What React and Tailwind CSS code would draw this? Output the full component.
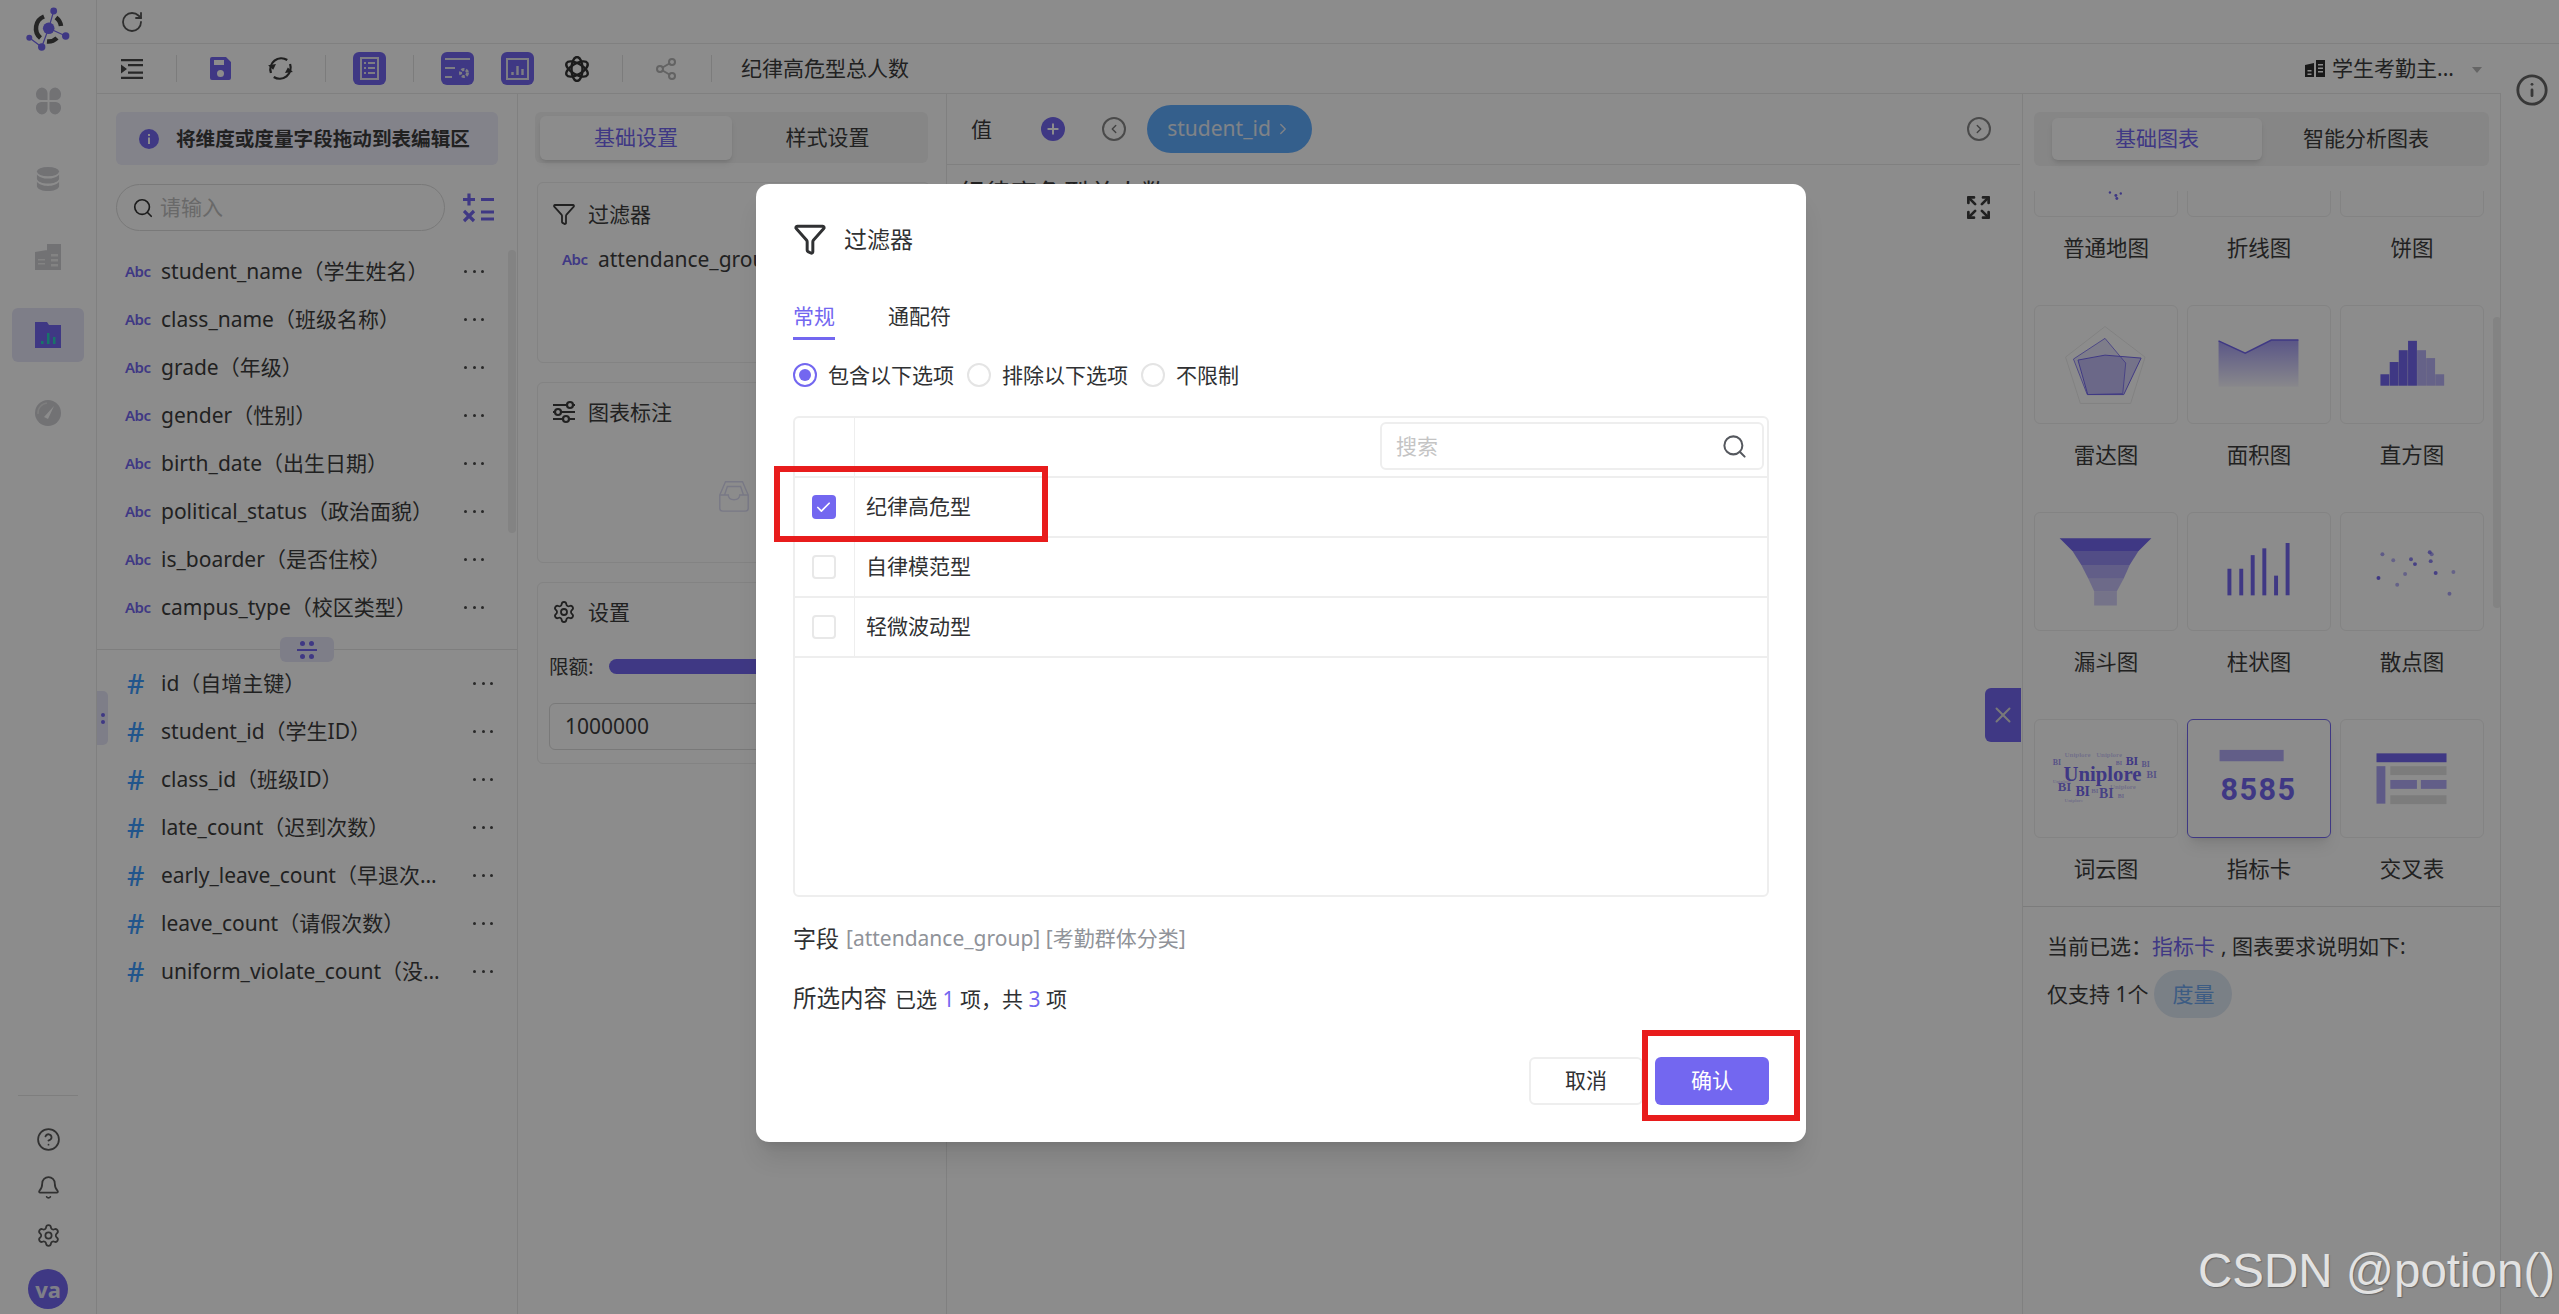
import {
    Bell,
    Check,
    ChevronLeft,
    ChevronRight,
    CircleHelp,
    Expand,
    Funnel,
    Info,
    Plus,
    RotateCw,
    Search,
    Settings,
    Share2,
    X,
} from "lucide-react";

const PRIMARY = "#7367f0";

const dimensions = [
    "student_name（学生姓名）",
    "class_name（班级名称）",
    "grade（年级）",
    "gender（性别）",
    "birth_date（出生日期）",
    "political_status（政治面貌）",
    "is_boarder（是否住校）",
    "campus_type（校区类型）",
];

const measures = [
    "id（自增主键）",
    "student_id（学生ID）",
    "class_id（班级ID）",
    "late_count（迟到次数）",
    "early_leave_count（早退次数）",
    "leave_count（请假次数）",
    "uniform_violate_count（没穿校服次数）",
];

function Dots() {
    return (
        <div className="flex w-[20px] shrink-0 justify-between">
            <span className="size-[3px] rounded-full bg-[#4a4a4a]"></span>
            <span className="size-[3px] rounded-full bg-[#4a4a4a]"></span>
            <span className="size-[3px] rounded-full bg-[#4a4a4a]"></span>
        </div>
    );
}

function Logo() {
    return (
        <svg width="48" height="48" viewBox="0 0 48 48" fill="none">
            <g stroke={PRIMARY} strokeWidth="1.2">
                <path d="M24.7 24.3 29.7 7M24.7 24.3 41.7 32M24.7 24.3 17.7 43M17.7 43 5.3 33.7" />
            </g>
            <g stroke="#444" strokeWidth="4.5" strokeLinecap="butt">
                <path d="M20 12.5A12.7 12.7 0 0 0 16.5 34" />
                <path d="M32 13.5A12.7 12.7 0 0 1 37 22" />
                <path d="M23 37.5A12.7 12.7 0 0 0 33 34" />
            </g>
            <circle cx="24.7" cy="24.3" r="5.8" fill={PRIMARY} />
            <circle cx="29.7" cy="7" r="3.4" fill={PRIMARY} />
            <circle cx="41.7" cy="32" r="3.7" fill={PRIMARY} />
            <circle cx="17.7" cy="43" r="3.7" fill={PRIMARY} />
            <circle cx="5.3" cy="33.7" r="3" fill={PRIMARY} />
        </svg>
    );
}

function NavItem({ active, children }) {
    return (
        <div
            className={`flex h-[54px] w-[72px] items-center justify-center rounded-[6px] ${
                active ? "bg-[#e6e6f8]" : ""
            }`}
        >
            {children}
        </div>
    );
}

function Sidebar() {
    return (
        <div className="flex h-full w-[97px] shrink-0 flex-col items-center border-r border-[#eaeaea] pt-[4px] pb-[5px]">
            <Logo />
            <div className="mt-[22px] flex flex-col gap-[24px]">
                <NavItem>
                    <svg width="25" height="28" viewBox="0 0 26 28" fill="#cfcfd4">
                        <path d="M12 13H5.5A5.5 5.5 0 0 1 0 7.5 7 7 0 0 1 6 0a6 6 0 0 1 6 6zM14 13h6.5A5.5 5.5 0 0 0 26 7.5 7 7 0 0 0 20 0a6 6 0 0 0-6 6zM12 15H5.5A5.5 5.5 0 0 0 0 20.5 7 7 0 0 0 6 28a6 6 0 0 0 6-6zM14 15h6.5A5.5 5.5 0 0 1 26 20.5 7 7 0 0 1 20 28a6 6 0 0 1-6-6z" />
                    </svg>
                </NavItem>
                <NavItem>
                    <svg width="24" height="24" viewBox="0 0 24 26" fill="#cfcfd4">
                        <ellipse cx="12" cy="5" rx="12" ry="5" />
                        <path d="M0 8c2 3 7 4.5 12 4.5S22 11 24 8v5c-1 3-6 5-12 5S1 16 0 13zM0 16c2 3 7 4.5 12 4.5S22 19 24 16v5c-1 3-6 5-12 5S1 24 0 21z" />
                    </svg>
                </NavItem>
                <NavItem>
                    <svg width="26" height="26" viewBox="0 0 26 26">
                        <path d="M0 8l12-2v20H0zM12 0h14v26H12z" fill="#cfcfd4" />
                        <path d="M16 10h7v2.5h-7zM16 15h7v2.5h-7zM16 20h7v2.5h-7zM3 15h7v1.5H3zM3 19h7v1.5H3z" fill="#eeeeee" />
                    </svg>
                </NavItem>
                <NavItem active>
                    <svg width="26" height="26" viewBox="0 0 26 26">
                        <path d="M0 0h12l2 3h12v23H0z" fill={PRIMARY} />
                        <path d="M6 19h2.5v3H6z" fill="#2dd4bf" />
                        <path d="M12 11h2.5v11H12z" fill="#2dd4bf" />
                        <path d="M18 15h2.5v7H18z" fill="#2dd4bf" />
                    </svg>
                </NavItem>
                <NavItem>
                    <svg width="26" height="28" viewBox="0 0 26 28">
                        <circle cx="13" cy="14" r="13" fill="#cfcfd4" />
                        <path d="M9 18 19 7l-6 13z" fill="#ffffff" />
                        <path d="M3 15a10 10 0 0 1 9-11" stroke="#e6e6e6" strokeWidth="1.5" fill="none" />
                    </svg>
                </NavItem>
            </div>
            <div className="mt-auto mb-[19px] h-px w-[60px] bg-[#e6e6e6]"></div>
            <div className="flex h-[48px] items-center justify-center text-[#5a5a5a]">
                <CircleHelp size={25} strokeWidth={1.7} />
            </div>
            <div className="flex h-[48px] items-center justify-center text-[#5a5a5a]">
                <Bell size={25} strokeWidth={1.7} />
            </div>
            <div className="flex h-[48px] items-center justify-center text-[#5a5a5a]">
                <Settings size={25} strokeWidth={1.7} />
            </div>
            <div className="mt-[10px] flex size-[40px] items-center justify-center rounded-full bg-[#7367f0] text-[22px] font-bold text-[#e8e8f8]">
                va
            </div>
        </div>
    );
}

function Tile({ children }) {
    return (
        <div className="flex size-[33px] items-center justify-center rounded-[6px] bg-[#7367f0]">
            <svg width="33" height="33" viewBox="0 0 33 33" fill="none" stroke="#e4e4ee" strokeWidth="2">
                {children}
            </svg>
        </div>
    );
}

function Slot({ className, children }) {
    return (
        <div className={`flex w-[44px] shrink-0 items-center justify-center ${className}`}>
            {children}
        </div>
    );
}

function Divider({ className }) {
    return <div className={`h-[27px] w-px shrink-0 bg-[#e2e2e2] ${className}`}></div>;
}

function Toolbar() {
    return (
        <div className="flex h-[50px] shrink-0 items-center border-b border-[#eaeaea] pl-[13px] pr-[19px]">
            <Slot>
                <svg width="22" height="20" viewBox="0 0 22 20" fill="#4a4a4a">
                    <path d="M0 0h22v2.2H0zM7 5h15v2.2H7zM7 12.5h15v2.2H7zM0 17.8h22V20H0zM0 5.5 6 10 0 14.5z" />
                </svg>
            </Slot>
            <Divider className="ml-[22px]" />
            <Slot className="ml-[21px]">
                <svg width="21" height="23" viewBox="0 0 21 23" fill={PRIMARY}>
                    <path fillRule="evenodd" d="M2 0h14l5 5v16a2 2 0 0 1-2 2H2a2 2 0 0 1-2-2V2a2 2 0 0 1 2-2zm2 3v5h10V3zm6.5 10a3.5 3.5 0 1 0 0 7 3.5 3.5 0 0 0 0-7z" />
                </svg>
            </Slot>
            <Slot className="ml-[16px]">
                <svg width="27" height="27" viewBox="0 0 24 24" fill="none" stroke="#3a3a3a" strokeWidth="2">
                    <path d="M3.5 16A9.8 9.8 0 0 1 18 4.5" />
                    <path d="M20.5 8A9.8 9.8 0 0 1 6 19.5" />
                    <path d="M1 9l4.5 4L8 8z" fill="#3a3a3a" stroke="none" />
                    <path d="M23 15l-4.5-4L16 16z" fill="#3a3a3a" stroke="none" />
                </svg>
            </Slot>
            <Divider className="ml-[23px]" />
            <Slot className="ml-[21px]">
                <Tile>
                    <rect x="8" y="6" width="17" height="21" />
                    <path d="M11 11h2M15 11h7M11 16h2M15 16h7M11 21h2M15 21h7" />
                </Tile>
            </Slot>
            <Divider className="ml-[22px]" />
            <Slot className="ml-[21px]">
                <Tile>
                    <path d="M4 7h25M4 16h10M4 25h7" />
                    <circle cx="23" cy="21" r="3.5" strokeWidth="3" strokeDasharray="3 1.5" />
                </Tile>
            </Slot>
            <Slot className="ml-[16px]">
                <Tile>
                    <rect x="6" y="7" width="21" height="20" />
                    <path d="M11.5 23v-3M16.5 23v-9M21.5 23v-6" strokeWidth="2.4" />
                </Tile>
            </Slot>
            <Slot className="ml-[16px]">
                <svg width="26" height="26" viewBox="0 0 26 26" fill="none" stroke="#333333" strokeWidth="2.4">
                    <ellipse cx="13" cy="13" rx="5.5" ry="12" />
                    <ellipse cx="13" cy="13" rx="5.5" ry="12" transform="rotate(60 13 13)" />
                    <ellipse cx="13" cy="13" rx="5.5" ry="12" transform="rotate(120 13 13)" />
                </svg>
            </Slot>
            <Divider className="ml-[23px]" />
            <Slot className="ml-[21px] text-[#b4b4b4]">
                <Share2 size={24} strokeWidth={2} />
            </Slot>
            <Divider className="ml-[23px]" />
            <div className="ml-[29px] text-[21px] leading-none text-[#3d3d3d]">纪律高危型总人数</div>
            <div className="ml-auto flex items-center">
                <svg width="20" height="17" viewBox="0 0 20 17" fill="#2e2e2e">
                    <path fillRule="evenodd" d="M0 5l9-2v14H0zm2.5 5v1.5h4V10zm0 3.5V15h4v-1.5zM11 0h9v17h-9zm2 4v1.5h5V4zm0 3.5V9h5V7.5zm0 3.5v1.5h5V11z" />
                </svg>
                <div className="ml-[7px] text-[21px] leading-none text-[#3d3d3d]">学生考勤主...</div>
                <div className="ml-[18px] mt-[2px] h-0 w-0 border-x-[5.5px] border-t-[6px] border-x-transparent border-t-[#b8b8b8]"></div>
            </div>
        </div>
    );
}

function FieldRow({ text }) {
    return (
        <div className="flex h-[48px] items-center pl-[28px] pr-[33px]">
            <span className="w-[36px] shrink-0 text-[15px] font-semibold tracking-[-0.5px] text-[#7367f0]">Abc</span>
            <span className="truncate text-[21px] leading-[32px] text-[#3d3d3d]">{text}</span>
            <div className="ml-auto">
                <Dots />
            </div>
        </div>
    );
}

function MeasureRow({ text }) {
    return (
        <div className="flex h-[48px] items-center pl-[28px] pr-[24px]">
            <span className="w-[36px] shrink-0 pl-[2px] text-[27px] leading-none font-medium text-[#3d9cff]">#</span>
            <span className="w-[283px] truncate text-[21px] leading-[32px] text-[#3d3d3d]">{text}</span>
            <div className="ml-auto">
                <Dots />
            </div>
        </div>
    );
}

function FieldPanel() {
    return (
        <div className="relative h-full w-[421px] shrink-0 border-r border-[#eaeaea]">
            <div className="mx-[19px] mt-[18px] flex h-[53px] items-center rounded-[6px] bg-[#eeeefc] pl-[23px]">
                <svg width="20" height="20" viewBox="0 0 20 20">
                    <circle cx="10" cy="10" r="10" fill={PRIMARY} />
                    <path d="M9 8.5h2V15H9zM9 5h2v2H9z" fill="#ffffff" />
                </svg>
                <span className="ml-[17px] text-[19.6px] leading-none font-bold text-[#3d3d3d]">
                    将维度或度量字段拖动到表编辑区
                </span>
            </div>
            <div className="ml-[19px] mt-[19px] flex items-center">
                <div className="flex h-[47px] w-[329px] items-center rounded-full border border-[#dcdcdc] pl-[15px]">
                    <Search size={22} strokeWidth={1.8} className="text-[#333333]" />
                    <span className="ml-[6px] text-[21px] leading-none text-[#c0c0c0]">请输入</span>
                </div>
                <svg className="ml-[18px]" width="31" height="30" viewBox="0 0 31 30" stroke={PRIMARY} strokeWidth="3.2" fill="none">
                    <path d="M0 6.5h12M6 .5v12M18 6.5h13M1 18l10 10M11 18 1 28M18 19h13M18 26h13" />
                </svg>
            </div>
            <div className="mt-[16px]">
                {dimensions.map((text) => (
                    <FieldRow key={text} text={text} />
                ))}
            </div>
            <div className="relative h-[28px]">
                <div className="absolute left-0 right-0 top-[18px] h-px bg-[#e6e6e6]"></div>
                <div className="absolute left-[183px] top-[6px] flex h-[25px] w-[54px] flex-col items-center justify-center gap-[3px] rounded-[6px] bg-[#e6e6f8]">
                    <div className="flex gap-[4px]">
                        <span className="size-[5px] rounded-full bg-[#7367f0]"></span>
                        <span className="size-[5px] rounded-full bg-[#7367f0]"></span>
                    </div>
                    <div className="h-[2px] w-[20px] bg-[#7367f0]"></div>
                    <div className="flex gap-[4px]">
                        <span className="size-[5px] rounded-full bg-[#7367f0]"></span>
                        <span className="size-[5px] rounded-full bg-[#7367f0]"></span>
                    </div>
                </div>
            </div>
            {measures.map((text) => (
                <MeasureRow key={text} text={text} />
            ))}
            <div className="absolute left-[411px] top-[156px] h-[283px] w-[8px] rounded-full bg-[#eeeeee]"></div>
            <div className="absolute left-0 top-[597px] flex h-[54px] w-[11px] flex-col items-center justify-center gap-[3px] rounded-r-[5px] bg-[#e6e6f8]">
                <span className="size-[4px] rounded-full bg-[#7367f0]"></span>
                <span className="size-[4px] rounded-full bg-[#7367f0]"></span>
            </div>
        </div>
    );
}

function SettingsPanel() {
    return (
        <div className="h-full w-[429px] shrink-0 border-r border-[#eaeaea] pl-[17px] pt-[18px]">
            <div className="flex h-[51px] w-[393px] items-center rounded-[6px] bg-[#f4f4f4] px-[5px]">
                <div className="flex h-[44px] w-[192px] items-center justify-center rounded-[6px] bg-white text-[21px] text-[#7367f0] shadow-md">
                    基础设置
                </div>
                <div className="flex-1 text-center text-[21px] text-[#3d3d3d]">样式设置</div>
            </div>
            <div className="ml-[2px] mt-[19px] h-[181px] w-[393px] rounded-[6px] border border-[#eeeeee] pl-[14px] pt-[19px]">
                <div className="flex items-center">
                    <Funnel size={24} strokeWidth={1.8} className="text-[#3d3d3d]" />
                    <span className="ml-[12px] text-[21px] leading-none text-[#3d3d3d]">过滤器</span>
                </div>
                <div className="ml-[10px] mt-[22px] flex items-center">
                    <span className="w-[36px] text-[15px] font-semibold tracking-[-0.5px] text-[#7367f0]">Abc</span>
                    <span className="text-[21px] leading-none text-[#3d3d3d]">attendance_group</span>
                </div>
            </div>
            <div className="ml-[2px] mt-[19px] h-[181px] w-[393px] rounded-[6px] border border-[#eeeeee] pl-[14px] pt-[17px]">
                <div className="flex items-center">
                    <svg width="24" height="24" viewBox="0 0 24 24" fill="none" stroke="#3d3d3d" strokeWidth="2.2">
                        <path d="M1 5h14M21 5h2M1 12h2M9 12h14M1 19h10M17 19h6" />
                        <circle cx="18" cy="5" r="3" />
                        <circle cx="6" cy="12" r="3" />
                        <circle cx="14" cy="19" r="3" />
                    </svg>
                    <span className="ml-[12px] text-[21px] leading-none text-[#3d3d3d]">图表标注</span>
                </div>
                <div className="mt-[54px] flex justify-center pr-[14px]">
                    <svg width="36" height="36" viewBox="0 0 38 38" fill="none" stroke="#dcdcf4" strokeWidth="1.5">
                        <path d="M4 18 10 4h18l6 14v14a3 3 0 0 1-3 3H7a3 3 0 0 1-3-3z" />
                        <path d="M4 18h9c0 3 2 5 6 5s6-2 6-5h9" />
                        <path d="M9 18l3-9h14l3 9" />
                    </svg>
                </div>
            </div>
            <div className="ml-[2px] mt-[19px] h-[182px] w-[393px] rounded-[6px] border border-[#eeeeee] pl-[11px] pt-[17px]">
                <div className="ml-[3px] flex items-center">
                    <Settings size={24} strokeWidth={1.8} className="text-[#3d3d3d]" />
                    <span className="ml-[12px] text-[21px] leading-none text-[#3d3d3d]">设置</span>
                </div>
                <div className="mt-[33px] flex items-center">
                    <span className="text-[19.6px] leading-none text-[#3d3d3d]">限额:</span>
                    <div className="ml-[16px] h-[15px] w-[250px] rounded-full bg-[#7367f0]"></div>
                </div>
                <div className="mt-[26px] flex h-[47px] w-[365px] items-center rounded-[6px] border border-[#dddddd] pl-[15px] text-[21px] leading-none text-[#3d3d3d]">
                    1000000
                </div>
            </div>
        </div>
    );
}

function CanvasPanel() {
    return (
        <div className="h-full w-[1075px] shrink-0">
            <div className="flex h-[71px] w-[1073px] items-center border-b border-[#eaeaea] pl-[24px] pr-[29px]">
                <span className="text-[21px] leading-none text-[#3d3d3d]">值</span>
                <div className="ml-[49px] flex size-[24px] items-center justify-center rounded-full bg-[#7367f0]">
                    <Plus size={16} strokeWidth={3} className="text-white" />
                </div>
                <div className="ml-[37px] flex size-[24px] items-center justify-center rounded-full border-2 border-[#888888]">
                    <ChevronLeft size={14} strokeWidth={2.4} className="text-[#777777]" />
                </div>
                <div className="ml-[21px] flex h-[48px] w-[165px] items-center justify-center rounded-full bg-[#60adff] text-[21px] text-[#e8eef6]">
                    student_id
                    <ChevronRight size={18} strokeWidth={1.8} className="ml-[3px]" />
                </div>
                <div className="ml-auto flex size-[24px] items-center justify-center rounded-full border-2 border-[#888888]">
                    <ChevronRight size={14} strokeWidth={2.4} className="text-[#777777]" />
                </div>
            </div>
            <div className="flex items-start justify-between pl-[12px] pr-[30px] pt-[13px]">
                <div className="text-[26px] leading-[30px] text-[#3d3d3d]">纪律高危型总人数</div>
                <Expand size={27} strokeWidth={2.4} className="mt-[16px] text-[#3d3d3d]" />
            </div>
        </div>
    );
}

function ChartCell({ label, selected, children }) {
    return (
        <div>
            <div
                className={`flex h-[119px] w-[144px] items-center justify-center rounded-[6px] border ${
                    selected ? "border-[#7367f0] shadow-lg" : "border-[#efefef]"
                }`}
            >
                {children}
            </div>
            <div className="flex h-[63px] items-center justify-center text-[21.5px] leading-none text-[#3d3d3d]">
                {label}
            </div>
        </div>
    );
}

function CellSvg({ children }) {
    return (
        <svg width="144" height="119" viewBox="0 0 144 119">
            {children}
        </svg>
    );
}

const scatterPoints = [
    [42, 42, 0.6],
    [53, 48, 0.5],
    [71, 47, 0.8],
    [75, 52, 0.9],
    [90, 40, 0.8],
    [92, 42, 0.6],
    [91, 49, 0.8],
    [38, 66, 1],
    [65, 62, 0.5],
    [57, 73, 0.5],
    [96, 61, 0.9],
    [114, 60, 0.5],
    [110, 82, 0.6],
];

const cloudWords = [
    ["BI", 92, 46, 12, 1],
    ["BI", 108, 48, 8, 0.7],
    ["BI", 18, 46, 8, 0.7],
    ["BI", 113, 59, 10, 0.7],
    ["BI", 23, 72, 13, 0.9],
    ["BI", 41, 77, 14, 1],
    ["BI", 65, 79, 14, 0.9],
    ["BI", 82, 46, 6, 0.6],
    ["BI", 57, 74, 7, 0.5],
    ["BI", 84, 79, 6, 0.5],
    ["Uniplore", 30, 38, 7, 0.35],
    ["Uniplore", 62, 38, 7, 0.35],
    ["Uniplore", 76, 70, 7, 0.35],
    ["Uniplore", 30, 83, 5, 0.35],
    ["Uniplore", 18, 64, 5, 0.35],
];

function ChartGrid() {
    return (
        <div className="-mt-[93.5px] grid grid-cols-[144px_144px_144px] gap-x-[9px] gap-y-[25px]">
            <ChartCell label="普通地图">
                <CellSvg>
                    <g fill={PRIMARY}>
                        <circle cx="76" cy="95" r="1.2" />
                        <circle cx="82" cy="98" r="1.5" />
                        <circle cx="87" cy="96" r="1.2" />
                        <circle cx="83" cy="101" r="1.5" />
                    </g>
                </CellSvg>
            </ChartCell>
            <ChartCell label="折线图">
                <CellSvg>
                    <path d="M40 80c10-5 30-5 60 12" stroke="#e6e6e6" strokeWidth="2" fill="none" />
                </CellSvg>
            </ChartCell>
            <ChartCell label="饼图">
                <CellSvg>
                    <circle cx="72" cy="60" r="33" fill={PRIMARY} />
                </CellSvg>
            </ChartCell>

            <ChartCell label="雷达图">
                <CellSvg>
                    <path d="M71 21 111.6 52 97 99H46L31 52z" stroke="#ececec" fill="none" />
                    <path d="M71 33 92 58 89 89 53 90 39 54z" stroke={PRIMARY} strokeOpacity="0.8" fill={PRIMARY} fillOpacity="0.18" />
                    <path d="M107.6 53 90 90 53.5 90 43.6 55 71 50z" stroke={PRIMARY} fill={PRIMARY} fillOpacity="0.3" />
                </CellSvg>
            </ChartCell>
            <ChartCell label="面积图">
                <CellSvg>
                    <defs>
                        <linearGradient id="areaFill" x1="0" y1="0" x2="0" y2="1">
                            <stop offset="0" stopColor={PRIMARY} stopOpacity="0.65" />
                            <stop offset="1" stopColor={PRIMARY} stopOpacity="0.05" />
                        </linearGradient>
                    </defs>
                    <path d="M31 35.5 58 48 84.6 34.7H112V82H31z" fill="url(#areaFill)" />
                    <path d="M31 35.5 58 48 84.6 34.7H112" stroke={PRIMARY} strokeWidth="1.5" fill="none" />
                </CellSvg>
            </ChartCell>
            <ChartCell label="直方图">
                <CellSvg>
                    <g fill={PRIMARY}>
                        <rect x="40" y="69.4" width="9" height="11.6" />
                        <rect x="49.4" y="57" width="9" height="24" />
                        <rect x="58.6" y="45" width="9" height="36" />
                        <rect x="68" y="35.5" width="9" height="45.5" />
                    </g>
                    <g fill={PRIMARY} fillOpacity="0.5">
                        <rect x="77.2" y="45" width="9" height="36" />
                        <rect x="86.4" y="53" width="9" height="28" />
                        <rect x="95.6" y="69.4" width="9" height="11.6" />
                    </g>
                </CellSvg>
            </ChartCell>

            <ChartCell label="漏斗图">
                <CellSvg>
                    <path d="M25 25.7H118L105 38.8H38z" fill={PRIMARY} />
                    <path d="M38 38.8H105L96 53H47z" fill={PRIMARY} fillOpacity="0.75" />
                    <path d="M47 53H96L90 66.5H54z" fill={PRIMARY} fillOpacity="0.55" />
                    <path d="M54 66.5H90L83 79.6H60z" fill={PRIMARY} fillOpacity="0.4" />
                    <path d="M60 79.6H83V94H60z" fill={PRIMARY} fillOpacity="0.3" />
                </CellSvg>
            </ChartCell>
            <ChartCell label="柱状图">
                <CellSvg>
                    <g fill={PRIMARY}>
                        <rect x="40" y="56.7" width="4" height="27" />
                        <rect x="52" y="56.7" width="4" height="27" />
                        <rect x="63.6" y="42.9" width="4" height="40.8" />
                        <rect x="75.4" y="36" width="4" height="47.7" />
                        <rect x="87.3" y="63.7" width="4" height="20" />
                        <rect x="99" y="30.6" width="4" height="53" />
                    </g>
                </CellSvg>
            </ChartCell>
            <ChartCell label="散点图">
                <CellSvg>
                    {scatterPoints.map(([x, y, opacity]) => (
                        <circle key={`${x}-${y}`} cx={x} cy={y} r="2" fill={PRIMARY} fillOpacity={opacity} />
                    ))}
                </CellSvg>
            </ChartCell>

            <ChartCell label="词云图">
                <CellSvg>
                    <g fill={PRIMARY} fontFamily="Liberation Serif, serif" fontWeight="700">
                        {cloudWords.map(([word, x, y, size, opacity]) => (
                            <text key={`${x}-${y}`} x={x} y={y} fontSize={size} fillOpacity={opacity}>
                                {word}
                            </text>
                        ))}
                        <text x="29" y="62" fontSize="21">Uniplore</text>
                    </g>
                </CellSvg>
            </ChartCell>
            <ChartCell label="指标卡" selected>
                <CellSvg>
                    <rect x="32" y="30.5" width="65" height="11.5" fill={PRIMARY} fillOpacity="0.55" />
                    <text x="33" y="81" fontSize="31" fontWeight="700" fontFamily="Roboto, sans-serif" letterSpacing="1.5" fill={PRIMARY}>
                        8585
                    </text>
                </CellSvg>
            </ChartCell>
            <ChartCell label="交叉表">
                <CellSvg>
                    <rect x="36" y="34" width="71" height="9" fill={PRIMARY} />
                    <rect x="36" y="47" width="9" height="38" fill={PRIMARY} fillOpacity="0.6" />
                    <rect x="50" y="47" width="57" height="9" fill="#e2e2e2" />
                    <rect x="50" y="61" width="27" height="9" fill={PRIMARY} fillOpacity="0.55" />
                    <rect x="81" y="61" width="26" height="9" fill={PRIMARY} fillOpacity="0.55" />
                    <rect x="50" y="76.5" width="57" height="9" fill="#e2e2e2" />
                </CellSvg>
            </ChartCell>
        </div>
    );
}

function ChartPanel() {
    return (
        <div className="relative h-full w-[479px] shrink-0 border-x border-[#eaeaea]">
            <div className="ml-[11px] mt-[18px] flex h-[54px] w-[455px] items-center rounded-[6px] bg-[#f4f4f4] pl-[18px]">
                <div className="flex h-[42px] w-[210px] items-center justify-center rounded-[6px] bg-white text-[21px] text-[#7367f0] shadow-md">
                    基础图表
                </div>
                <div className="ml-[9px] w-[190px] text-center text-[21px] text-[#3d3d3d]">智能分析图表</div>
            </div>
            <div className="mt-[25px] h-[716px] overflow-hidden border-b border-[#e2e2e2] pl-[11px]">
                <ChartGrid />
            </div>
            <div className="ml-[24px] mt-[29px] flex items-center text-[21px] leading-none text-[#3d3d3d]">
                当前已选：<span className="text-[#7367f0]">指标卡</span>
                <span className="ml-[6px]">, 图表要求说明如下:</span>
            </div>
            <div className="ml-[24px] mt-[13px] flex items-center text-[21px] leading-none text-[#3d3d3d]">
                仅支持 1个
                <div className="ml-[6px] flex h-[48px] w-[78px] items-center justify-center rounded-full bg-[#dfe9f5] text-[#6fa8ee]">
                    度量
                </div>
            </div>
            <div className="absolute left-[470px] top-[223px] h-[291px] w-[8px] rounded-full bg-[#eeeeee]"></div>
            <div className="absolute -left-[38px] top-[594px] flex h-[54px] w-[36px] items-center justify-center rounded-l-[6px] bg-[#7367f0] text-[#dddddd]">
                <X size={26} strokeWidth={1.8} />
            </div>
        </div>
    );
}

function Radio({ label, checked }) {
    return (
        <div className="flex items-center gap-[11px]">
            <div
                className={`flex size-[24px] items-center justify-center rounded-full border-2 ${
                    checked ? "border-[#7367f0]" : "border-[#e4e4e4]"
                }`}
            >
                {checked && <div className="size-[12px] rounded-full bg-[#7367f0]"></div>}
            </div>
            <span className="text-[21px] leading-none text-[#303133]">{label}</span>
        </div>
    );
}

function OptionRow({ label, checked }) {
    return (
        <div className="flex h-[60px] border-b-2 border-[#eeeeee]">
            <div className="flex w-[60px] items-center justify-center border-r border-[#eeeeee] pr-[2px]">
                {checked ? (
                    <div className="flex size-[24px] items-center justify-center rounded-[4px] bg-[#7367f0]">
                        <Check size={17} strokeWidth={2.4} className="text-white" />
                    </div>
                ) : (
                    <div className="size-[24px] rounded-[4px] border-2 border-[#e8e8e8]"></div>
                )}
            </div>
            <div className="flex items-center pb-[2px] pl-[11px] text-[21px] leading-none text-[#303133]">{label}</div>
        </div>
    );
}

function FilterModal() {
    return (
        <div className="absolute left-[756px] top-[184px] h-[958px] w-[1050px] rounded-[13px] bg-white px-[37px] pt-[37px] shadow-xl">
            <div className="flex h-[36px] items-center">
                <Funnel size={34} strokeWidth={2.1} className="text-[#303133]" />
                <span className="ml-[17px] text-[23px] leading-none text-[#303133]">过滤器</span>
            </div>
            <div className="mt-[38px] flex h-[45px] gap-[53px]">
                <div className="flex w-[42px] flex-col">
                    <div className="flex h-[42px] items-center text-[21px] leading-none text-[#7367f0]">常规</div>
                    <div className="h-[3px] w-[42px] bg-[#7367f0]"></div>
                </div>
                <div className="flex h-[42px] items-center text-[21px] leading-none text-[#303133]">通配符</div>
            </div>
            <div className="mt-[23px] flex h-[24px] gap-[13px]">
                <Radio label="包含以下选项" checked />
                <Radio label="排除以下选项" />
                <Radio label="不限制" />
            </div>
            <div className="mt-[29px] h-[481px] rounded-[6px] border-2 border-[#eeeeee]">
                <div className="flex h-[60px] border-b-2 border-[#eeeeee]">
                    <div className="w-[60px] border-r border-[#eeeeee]"></div>
                    <div className="ml-auto mr-[3px] mt-[4px] flex h-[48px] w-[384px] items-center rounded-[6px] border-2 border-[#eeeeee] pl-[14px] pr-[14px]">
                        <span className="text-[21px] leading-none text-[#c4c4c4]">搜索</span>
                        <Search size={27} strokeWidth={1.8} className="ml-auto text-[#55585e]" />
                    </div>
                </div>
                <OptionRow label="纪律高危型" checked />
                <OptionRow label="自律模范型" />
                <OptionRow label="轻微波动型" />
            </div>
            <div className="mt-[26px] flex h-[30px] items-center">
                <span className="text-[23px] leading-none text-[#303133]">字段</span>
                <span className="ml-[7px] text-[21px] leading-none text-[#909399]">
                    [attendance_group] [考勤群体分类]
                </span>
            </div>
            <div className="mt-[31px] flex h-[30px] items-center text-[21px] leading-none text-[#303133]">
                <span className="mr-[8px] text-[23.5px]">所选内容</span>
                已选&nbsp;<span className="text-[#7367f0]">1</span>&nbsp;项，共&nbsp;
                <span className="text-[#7367f0]">3</span>&nbsp;项
            </div>
            <div className="mt-[43px] flex justify-end gap-[12px]">
                <div className="flex h-[48px] w-[114px] items-center justify-center rounded-[6px] border-2 border-[#eeeeee] text-[21px] text-[#303133]">
                    取消
                </div>
                <div className="flex h-[48px] w-[114px] items-center justify-center rounded-[6px] bg-[#7367f0] text-[21px] text-white">
                    确认
                </div>
            </div>
        </div>
    );
}

export default function App() {
    return (
        <div className="relative flex h-[1314px] w-[2559px] overflow-hidden bg-white font-['Noto_Sans','Noto_Sans_CJK_SC',sans-serif]">
            <Sidebar />
            <div className="flex h-full flex-1 flex-col">
                <div className="flex h-[44px] shrink-0 items-center border-b border-[#eaeaea] pl-[23px]">
                    <RotateCw size={24} strokeWidth={1.8} className="text-[#555555]" />
                </div>
                <div className="flex flex-1">
                    <div className="flex w-[2404px] shrink-0 flex-col">
                        <Toolbar />
                        <div className="flex flex-1">
                            <FieldPanel />
                            <SettingsPanel />
                            <CanvasPanel />
                            <ChartPanel />
                        </div>
                    </div>
                    <div className="flex w-[58px] shrink-0 justify-center pl-[4px] pt-[29px]">
                        <Info size={34} strokeWidth={2} className="text-[#666666]" />
                    </div>
                </div>
            </div>

            <div className="absolute inset-0 bg-black/45"></div>
            <FilterModal />

            <div className="absolute left-[774px] top-[466px] h-[76px] w-[274px] border-[6px] border-[#e81c1c]"></div>
            <div className="absolute left-[1642px] top-[1030px] h-[91px] w-[158px] border-[6px] border-[#e81c1c]"></div>

            <div className="absolute left-[2198px] top-[1243px] font-['Liberation_Sans',sans-serif] text-[47.5px] leading-[56px] whitespace-nowrap text-[#e2e2e2] [text-shadow:1px_1px_1px_#666]">
                CSDN @potion()
            </div>
        </div>
    );
}
